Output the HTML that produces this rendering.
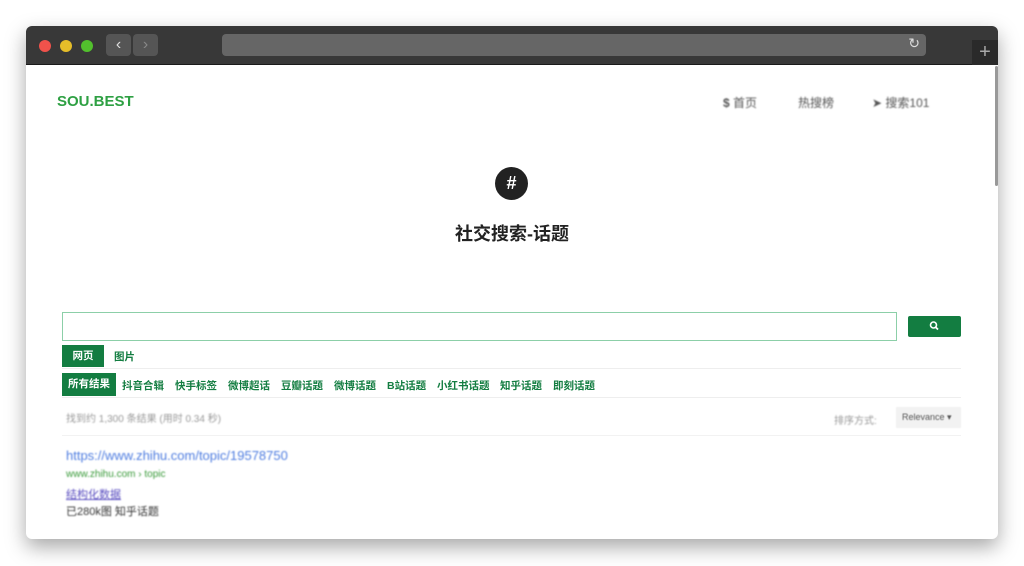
<!DOCTYPE html>
<html><head><meta charset="utf-8"><style>
*{margin:0;padding:0;box-sizing:border-box}
body{width:1024px;height:566px;background:#fff;position:relative;overflow:hidden;font-family:"Liberation Sans","Noto Sans CJK SC",sans-serif}
.win{position:absolute;left:26px;top:26px;width:972px;height:513px;background:#fff;border-radius:6px;box-shadow:0 8px 20px rgba(0,0,0,.35);overflow:hidden}
.bar{position:absolute;left:0;top:0;width:972px;height:39px;background:#383838;border-bottom:1px solid #1a1a1a}
.dot{position:absolute;top:14px;width:12px;height:12px;border-radius:50%}
.nb{position:absolute;top:8px;width:25px;height:22px;background:#555;border-radius:4px;color:#ddd;font-size:16px;text-align:center;line-height:22px}
.url{position:absolute;left:196px;top:8px;width:704px;height:22px;background:#666;border-radius:4px}
.abs{position:absolute}
.g{color:#137d41}
.t{position:absolute;top:352px;font-size:10.5px;font-weight:bold;color:#137d41;white-space:nowrap}
</style></head><body>
<div class="win">
<div class="bar">
<div class="dot" style="left:13px;background:#f0524b"></div>
<div class="dot" style="left:34px;background:#e5bd29"></div>
<div class="dot" style="left:55px;background:#52c02d"></div>
<div class="nb" style="left:80px">&#8249;</div>
<div class="nb" style="left:107px;color:#888">&#8250;</div>
<div class="url"><span style="position:absolute;right:6px;top:1px;color:#ddd;font-size:14px">&#8635;</span></div>
<div style="position:absolute;left:946px;top:14px;width:26px;height:25px;background:#2a2a2a;color:#aaa;font-size:20px;text-align:center;line-height:24px">+</div>
</div>
<div class="abs" style="left:31px;top:67px;font-size:15px;font-weight:bold;color:#2ea043">SOU.BEST</div>
<div class="abs" style="left:697px;top:68px;font-size:12px;color:#555;filter:blur(0.8px)"><b>$</b> 首页</div>
<div class="abs" style="left:772px;top:68px;font-size:12px;color:#555;filter:blur(0.8px)">热搜榜</div>
<div class="abs" style="left:846px;top:68px;font-size:12px;color:#555;filter:blur(0.8px)">➤ 搜索101</div>
<div class="abs" style="left:469px;top:141px;width:33px;height:33px;border-radius:50%;background:#222;color:#fff;font-weight:bold;font-size:18px;text-align:center;line-height:33px">#</div>
<div class="abs" style="left:0;width:972px;top:194px;text-align:center;font-size:18px;font-weight:bold;color:#222">社交搜索-话题</div>
<div class="abs" style="left:36px;top:286px;width:835px;height:29px;border:1px solid #8ccfa8"></div>
<div class="abs" style="left:882px;top:290px;width:53px;height:21px;background:#137d41;border-radius:2px">
<svg width="53" height="21" viewBox="0 0 53 21"><circle cx="25.5" cy="9" r="3" fill="none" stroke="#fff" stroke-width="1.6"/><line x1="27.7" y1="11.2" x2="30" y2="13.5" stroke="#fff" stroke-width="1.8"/></svg></div>
<div class="abs" style="left:36px;top:319px;width:42px;height:22px;background:#137d41;color:#fff;font-size:10.5px;font-weight:bold;text-align:center;line-height:22px">网页</div>
<div class="abs g" style="left:88px;top:323px;font-size:10.5px;font-weight:bold">图片</div>
<div class="abs" style="left:36px;top:342px;width:899px;border-top:1px solid #eee"></div>
<div class="abs" style="left:36px;top:347px;width:54px;height:23px;background:#137d41;color:#fff;font-size:10.5px;font-weight:bold;text-align:center;line-height:23px">所有结果</div>
<div class="t" style="left:96px">抖音合辑</div>
<div class="t" style="left:149px">快手标签</div>
<div class="t" style="left:202px">微博超话</div>
<div class="t" style="left:255px">豆瓣话题</div>
<div class="t" style="left:308px">微博话题</div>
<div class="t" style="left:361px">B站话题</div>
<div class="t" style="left:411px">小红书话题</div>
<div class="t" style="left:474px">知乎话题</div>
<div class="t" style="left:527px">即刻话题</div>
<div class="abs" style="left:36px;top:371px;width:899px;border-top:1px solid #eee"></div>
<div class="abs" style="left:40px;top:384px;font-size:10px;color:#999;filter:blur(0.8px)">找到约 1,300 条结果 (用时 0.34 秒)</div>
<div class="abs" style="left:808px;top:386px;font-size:10px;color:#999;filter:blur(0.8px)">排序方式:</div>
<div class="abs" style="left:870px;top:381px;width:65px;height:21px;background:#f2f2f2;font-size:9px;color:#555;line-height:21px;padding-left:6px;filter:blur(0.6px)">Relevance ▾</div>
<div class="abs" style="left:36px;top:409px;width:899px;border-top:1px solid #f2f2f2"></div>
<div class="abs" style="left:40px;top:422px;font-size:13px;color:#4f7de0;filter:blur(0.7px)">https://www.zhihu.com/topic/19578750</div>
<div class="abs" style="left:40px;top:443px;font-size:10px;color:#3a9a3a;filter:blur(0.7px)">www.zhihu.com › topic</div>
<div class="abs" style="left:40px;top:460px;font-size:11px;color:#5a4ec0;text-decoration:underline;filter:blur(0.7px)">结构化数据</div>
<div class="abs" style="left:40px;top:477px;font-size:11px;color:#333;filter:blur(0.7px)">已280k图 知乎话题</div>
<div class="abs" style="left:969px;top:40px;width:3px;height:120px;background:#999;border-radius:2px"></div>
</div>
</body></html>
